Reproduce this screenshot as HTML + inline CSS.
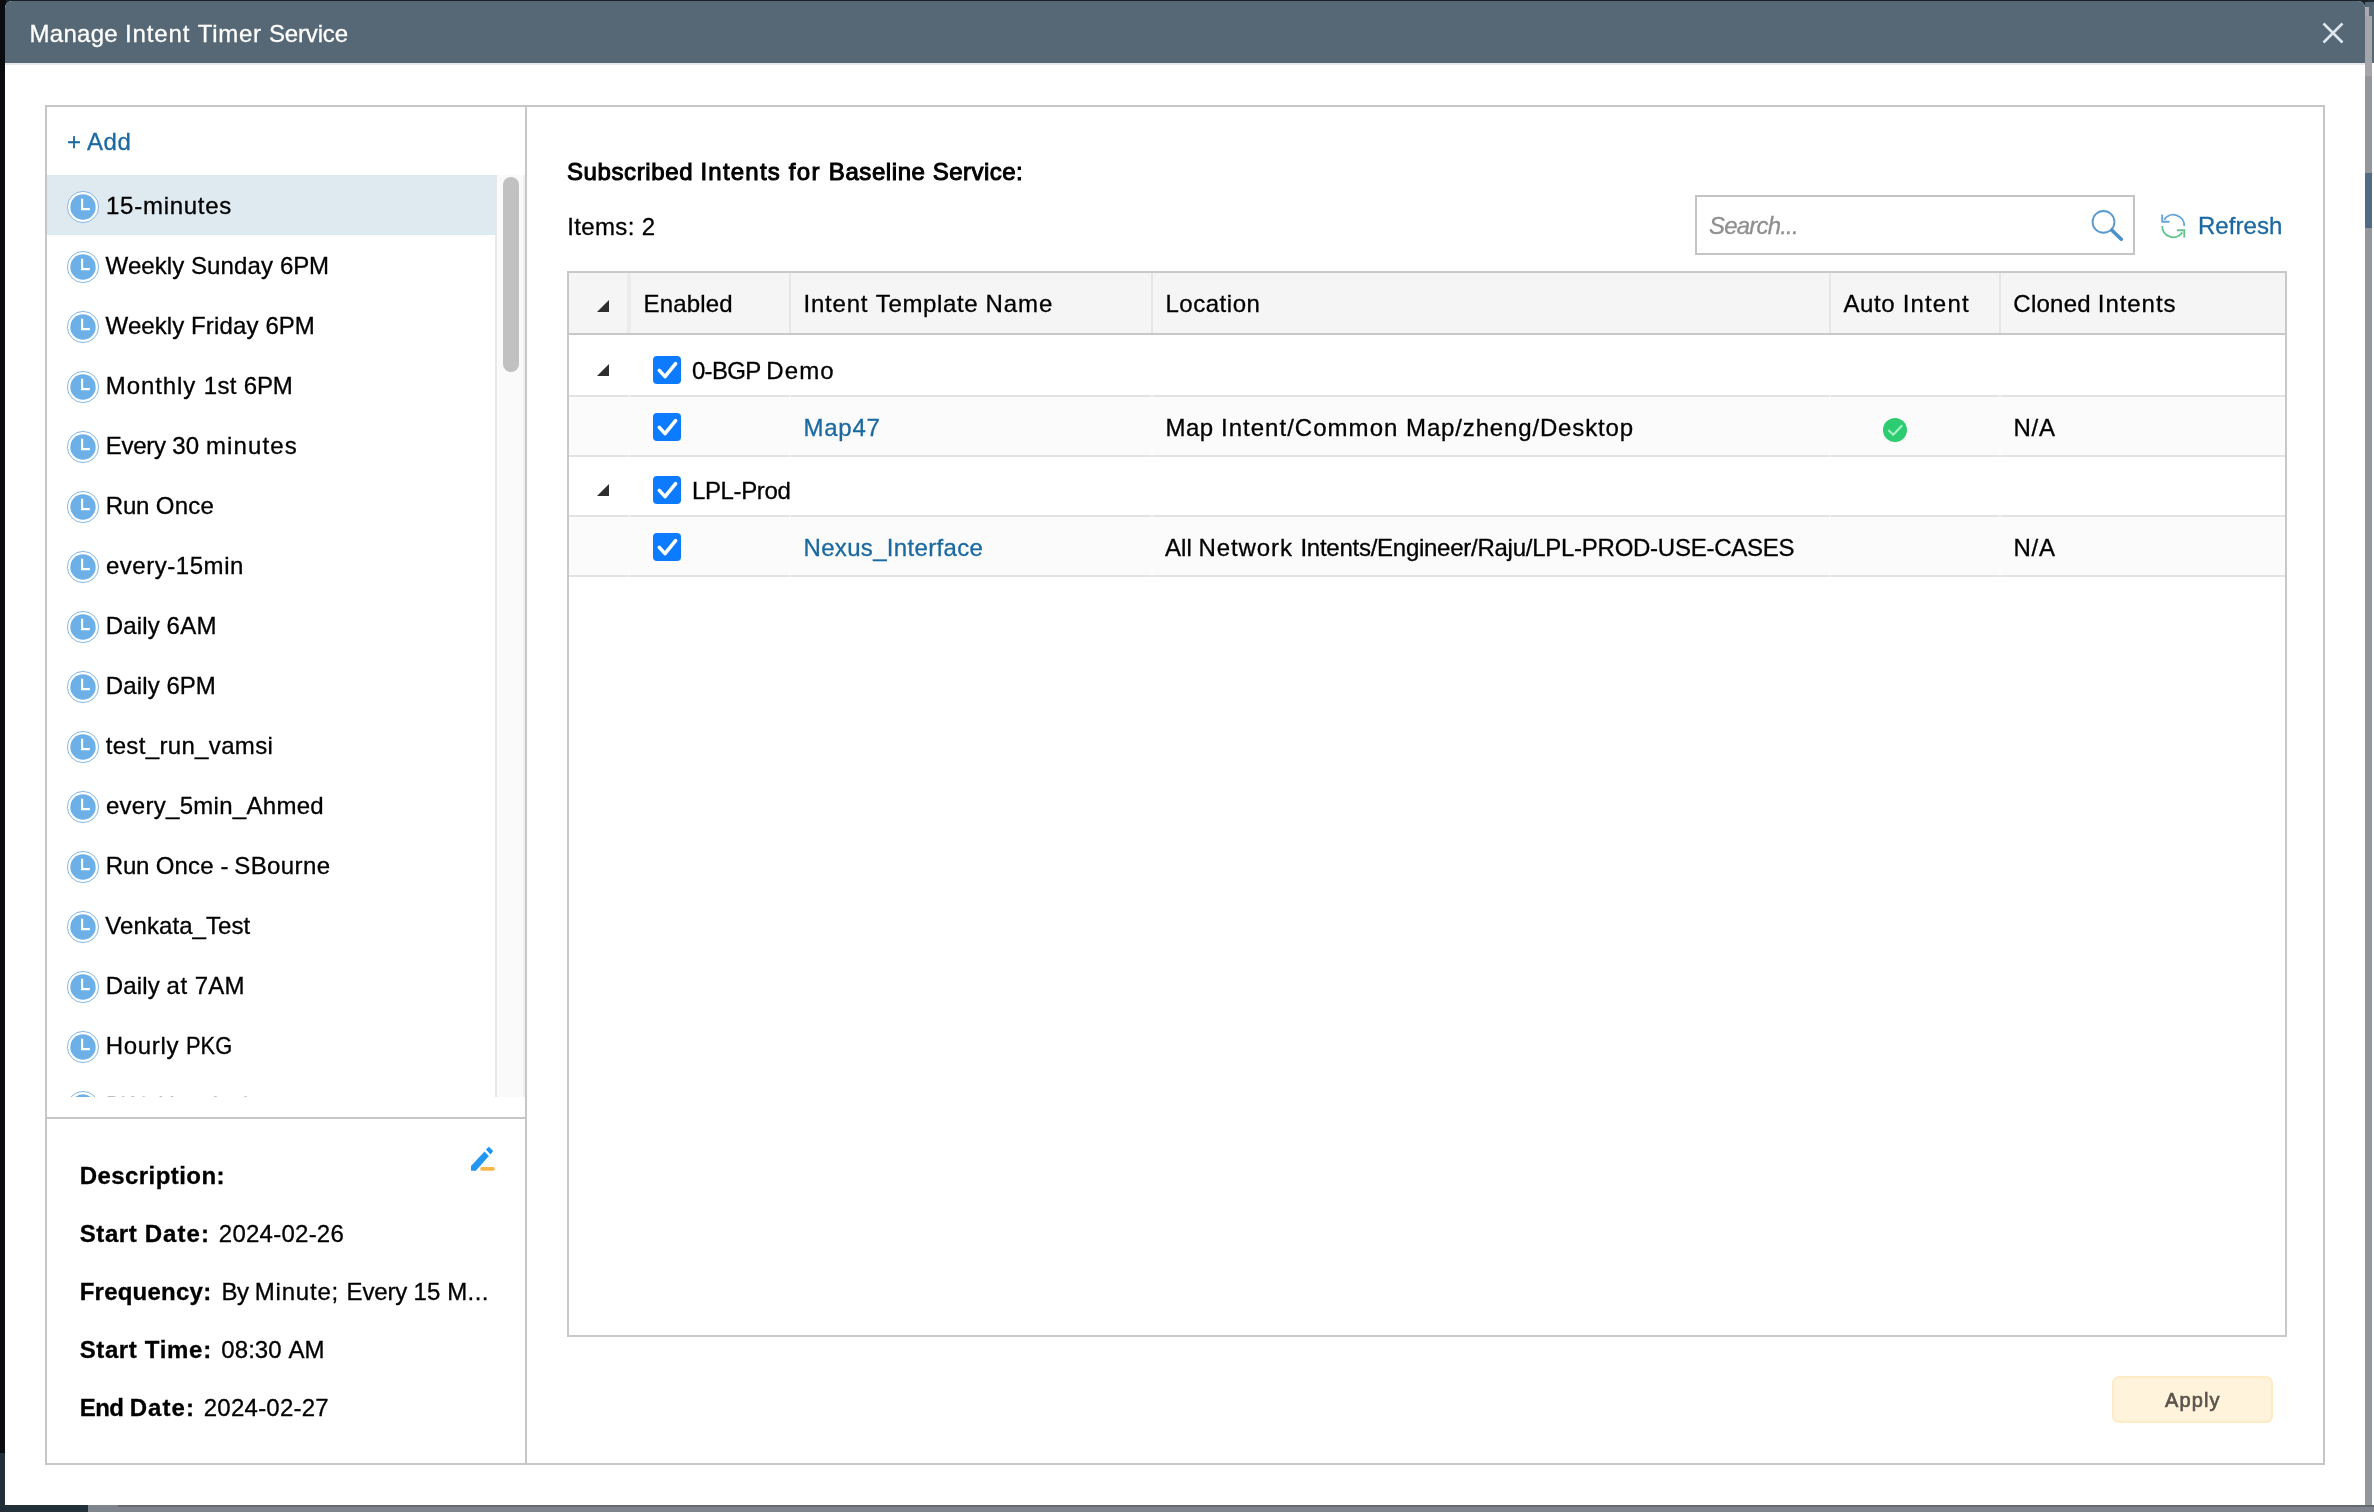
<!DOCTYPE html>
<html lang="en"><head><meta charset="utf-8"><title>Manage Intent Timer Service</title>
<style>
html,body{margin:0;padding:0}
body{width:2374px;height:1512px;position:relative;overflow:hidden;background:#fff;font-family:"Liberation Sans", sans-serif;font-size:24px;line-height:28px;color:#000}
.ab{position:absolute;display:block}
#root{left:0;top:0;width:2374px;height:1512px;overflow:hidden;will-change:transform}
.tx{position:absolute;white-space:nowrap;height:28px;-webkit-text-stroke:0.3px currentColor}
#dlg{left:5px;top:1px;width:2360px;height:1504px;background:#fff;border-radius:7px 7px 0 0;overflow:hidden}
#hdr{left:0;top:0;width:2360px;height:62px;background:#566875}
#hdrline{left:0;top:62px;width:2360px;height:2px;background:#e6eaee}
#panel{left:45px;top:105px;width:2276px;height:1356px;border:2px solid #c6c6c6}
#vdiv{left:525px;top:107px;width:2px;height:1356px;background:#c6c6c6}
#hdiv{left:47px;top:1117px;width:478px;height:2px;background:#c6c6c6}
#list{left:47px;top:175px;width:478px;height:922px;overflow:hidden}
#sel{left:0;top:0;width:448px;height:60px;background:#dfe9f0}
#track{left:448px;top:0;width:30px;height:922px;background:#fafafa;border-left:2px solid #e8e8e8;border-right:2px solid #f0f0f0;box-sizing:border-box}
#thumb{left:456px;top:2px;width:16px;height:195px;border-radius:8px;background:#c1c1c1}
#search{left:1695px;top:195px;width:436px;height:56px;border:2px solid #c4c4c4;background:#fff}
#tbl{left:567px;top:271px;width:1716px;height:1062px;border:2px solid #c8c8c8;background:#fff}
#thead{left:569px;top:273px;width:1716px;height:60px;background:#f5f5f5}
#theadline{left:569px;top:333px;width:1716px;height:2px;background:#c8c8c8}
.cs{position:absolute;top:273px;width:2px;height:60px;background:#e6e6e6}
.rl{position:absolute;left:569px;width:1716px;height:2px;background:#e3e3e3}
.alt{position:absolute;left:569px;width:1716px;height:58px;background:#fbfbfb}
.gap{position:absolute;top:335px;width:2px;height:242px;background:rgba(255,255,255,.35)}
#apply{left:2112px;top:1376px;width:157px;height:43px;border:2px solid #fdebc6;border-radius:7px;background:#fff3db}

</style></head>
<body>
<div id="root" class="ab">
<div class="ab" style="left:0;top:0;width:2374px;height:2px;background:#1d2a34"></div>
<div class="ab" style="left:0;top:0;width:2368px;height:10px;background:#1a222b"></div>
<div class="ab" style="left:0;top:0;width:6px;height:1512px;background:#0b0c10"></div>
<div class="ab" style="left:2364px;top:66px;width:8px;height:1440px;background:#93969a"></div>
<div class="ab" style="left:2364px;top:173px;width:8px;height:55px;background:#526b84"></div>
<div class="ab" style="left:2365px;top:2px;width:9px;height:61px;background:#566875"></div>
<div class="ab" style="left:2365px;top:7px;width:4px;height:60px;background:#a9abae"></div>
<div class="ab" style="left:2365px;top:16px;width:7px;height:60px;background:#a4a6aa"></div>
<div class="ab" style="left:0;top:1453px;width:6px;height:59px;background:#22303a"></div>
<div class="ab" style="left:0;top:1505px;width:2374px;height:7px;background:#80858d"></div>
<div class="ab" style="left:118px;top:1505px;width:2256px;height:2px;background:#656a70"></div>
<div class="ab" style="left:0;top:1505px;width:88px;height:7px;background:#22303a"></div>
<div class="ab" style="left:88px;top:1505px;width:30px;height:7px;background:#7f858c"></div>
<div id="dlg" class="ab"><div id="hdr" class="ab"></div><div id="hdrline" class="ab"></div></div>
<header>
<span class="tx" style="left:29.48px;top:20.00px;color:#fff;"><span style="letter-spacing:0.295px">Manage </span><span style="letter-spacing:0.869px">Intent </span><span style="letter-spacing:0.678px">Timer </span><span style="letter-spacing:-0.148px">Service</span></span>
<svg class="ab" style="left:2321px;top:21px" width="24" height="24" viewBox="0 0 24 24"><path d="M2.5 2.5L21.5 21.5M21.5 2.5L2.5 21.5" stroke="#dfe7ee" stroke-width="2.6" fill="none"/></svg>
</header>
<div id="panel" class="ab"></div><div id="vdiv" class="ab"></div><div id="hdiv" class="ab"></div>
<aside>
<span class="tx" style="left:67.09px;top:128.00px;color:#1a69a0;"><span style="letter-spacing:-0.410px">+ </span><span style="letter-spacing:0.592px">Add</span></span>
<div id="list" class="ab"><div id="sel" class="ab"></div><div id="track" class="ab"></div><div id="thumb" class="ab"></div>
<div class="item"><svg class="ab" style="left:19px;top:15px" width="34" height="34" viewBox="-17 -17 34 34"><circle r="15.6" fill="#fff" stroke="#86b9e6" stroke-width="1"/><circle r="12.7" fill="#6db0e8"/><path d="M-0.9 -8.2V2.1H6.8" fill="none" stroke="#fff" stroke-width="2.1"/></svg><span class="tx" style="left:59.00px;top:17.00px;color:#000;letter-spacing:0.737px;">15-minutes</span></div>
<div class="item"><svg class="ab" style="left:19px;top:75px" width="34" height="34" viewBox="-17 -17 34 34"><circle r="15.6" fill="#fff" stroke="#86b9e6" stroke-width="1"/><circle r="12.7" fill="#6db0e8"/><path d="M-0.9 -8.2V2.1H6.8" fill="none" stroke="#fff" stroke-width="2.1"/></svg><span class="tx" style="left:58.62px;top:77.00px;color:#000;"><span style="letter-spacing:0.062px">Weekly </span><span style="letter-spacing:0.136px">Sunday </span><span style="letter-spacing:-0.117px">6PM</span></span></div>
<div class="item"><svg class="ab" style="left:19px;top:135px" width="34" height="34" viewBox="-17 -17 34 34"><circle r="15.6" fill="#fff" stroke="#86b9e6" stroke-width="1"/><circle r="12.7" fill="#6db0e8"/><path d="M-0.9 -8.2V2.1H6.8" fill="none" stroke="#fff" stroke-width="2.1"/></svg><span class="tx" style="left:58.62px;top:137.00px;color:#000;"><span style="letter-spacing:0.062px">Weekly </span><span style="letter-spacing:0.184px">Friday </span><span style="letter-spacing:-0.117px">6PM</span></span></div>
<div class="item"><svg class="ab" style="left:19px;top:195px" width="34" height="34" viewBox="-17 -17 34 34"><circle r="15.6" fill="#fff" stroke="#86b9e6" stroke-width="1"/><circle r="12.7" fill="#6db0e8"/><path d="M-0.9 -8.2V2.1H6.8" fill="none" stroke="#fff" stroke-width="2.1"/></svg><span class="tx" style="left:58.78px;top:197.00px;color:#000;"><span style="letter-spacing:0.914px">Monthly </span><span style="letter-spacing:0.299px">1st </span><span style="letter-spacing:-0.117px">6PM</span></span></div>
<div class="item"><svg class="ab" style="left:19px;top:255px" width="34" height="34" viewBox="-17 -17 34 34"><circle r="15.6" fill="#fff" stroke="#86b9e6" stroke-width="1"/><circle r="12.7" fill="#6db0e8"/><path d="M-0.9 -8.2V2.1H6.8" fill="none" stroke="#fff" stroke-width="2.1"/></svg><span class="tx" style="left:58.78px;top:257.00px;color:#000;"><span style="letter-spacing:-0.256px">Every </span><span style="letter-spacing:0.105px">30 </span><span style="letter-spacing:1.143px">minutes</span></span></div>
<div class="item"><svg class="ab" style="left:19px;top:315px" width="34" height="34" viewBox="-17 -17 34 34"><circle r="15.6" fill="#fff" stroke="#86b9e6" stroke-width="1"/><circle r="12.7" fill="#6db0e8"/><path d="M-0.9 -8.2V2.1H6.8" fill="none" stroke="#fff" stroke-width="2.1"/></svg><span class="tx" style="left:58.78px;top:317.00px;color:#000;"><span style="letter-spacing:-0.161px">Run </span><span style="letter-spacing:0.223px">Once</span></span></div>
<div class="item"><svg class="ab" style="left:19px;top:375px" width="34" height="34" viewBox="-17 -17 34 34"><circle r="15.6" fill="#fff" stroke="#86b9e6" stroke-width="1"/><circle r="12.7" fill="#6db0e8"/><path d="M-0.9 -8.2V2.1H6.8" fill="none" stroke="#fff" stroke-width="2.1"/></svg><span class="tx" style="left:58.90px;top:377.00px;color:#000;letter-spacing:0.543px;">every-15min</span></div>
<div class="item"><svg class="ab" style="left:19px;top:435px" width="34" height="34" viewBox="-17 -17 34 34"><circle r="15.6" fill="#fff" stroke="#86b9e6" stroke-width="1"/><circle r="12.7" fill="#6db0e8"/><path d="M-0.9 -8.2V2.1H6.8" fill="none" stroke="#fff" stroke-width="2.1"/></svg><span class="tx" style="left:58.78px;top:437.00px;color:#000;"><span style="letter-spacing:0.137px">Daily </span><span style="letter-spacing:0.252px">6AM</span></span></div>
<div class="item"><svg class="ab" style="left:19px;top:495px" width="34" height="34" viewBox="-17 -17 34 34"><circle r="15.6" fill="#fff" stroke="#86b9e6" stroke-width="1"/><circle r="12.7" fill="#6db0e8"/><path d="M-0.9 -8.2V2.1H6.8" fill="none" stroke="#fff" stroke-width="2.1"/></svg><span class="tx" style="left:58.78px;top:497.00px;color:#000;"><span style="letter-spacing:0.137px">Daily </span><span style="letter-spacing:-0.117px">6PM</span></span></div>
<div class="item"><svg class="ab" style="left:19px;top:555px" width="34" height="34" viewBox="-17 -17 34 34"><circle r="15.6" fill="#fff" stroke="#86b9e6" stroke-width="1"/><circle r="12.7" fill="#6db0e8"/><path d="M-0.9 -8.2V2.1H6.8" fill="none" stroke="#fff" stroke-width="2.1"/></svg><span class="tx" style="left:58.66px;top:557.00px;color:#000;letter-spacing:0.343px;">test_run_vamsi</span></div>
<div class="item"><svg class="ab" style="left:19px;top:615px" width="34" height="34" viewBox="-17 -17 34 34"><circle r="15.6" fill="#fff" stroke="#86b9e6" stroke-width="1"/><circle r="12.7" fill="#6db0e8"/><path d="M-0.9 -8.2V2.1H6.8" fill="none" stroke="#fff" stroke-width="2.1"/></svg><span class="tx" style="left:58.90px;top:617.00px;color:#000;letter-spacing:0.292px;">every_5min_Ahmed</span></div>
<div class="item"><svg class="ab" style="left:19px;top:675px" width="34" height="34" viewBox="-17 -17 34 34"><circle r="15.6" fill="#fff" stroke="#86b9e6" stroke-width="1"/><circle r="12.7" fill="#6db0e8"/><path d="M-0.9 -8.2V2.1H6.8" fill="none" stroke="#fff" stroke-width="2.1"/></svg><span class="tx" style="left:58.78px;top:677.00px;color:#000;"><span style="letter-spacing:-0.161px">Run </span><span style="letter-spacing:0.103px">Once </span><span style="letter-spacing:-0.352px">- </span><span style="letter-spacing:0.377px">SBourne</span></span></div>
<div class="item"><svg class="ab" style="left:19px;top:735px" width="34" height="34" viewBox="-17 -17 34 34"><circle r="15.6" fill="#fff" stroke="#86b9e6" stroke-width="1"/><circle r="12.7" fill="#6db0e8"/><path d="M-0.9 -8.2V2.1H6.8" fill="none" stroke="#fff" stroke-width="2.1"/></svg><span class="tx" style="left:58.30px;top:737.00px;color:#000;letter-spacing:0.075px;">Venkata_Test</span></div>
<div class="item"><svg class="ab" style="left:19px;top:795px" width="34" height="34" viewBox="-17 -17 34 34"><circle r="15.6" fill="#fff" stroke="#86b9e6" stroke-width="1"/><circle r="12.7" fill="#6db0e8"/><path d="M-0.9 -8.2V2.1H6.8" fill="none" stroke="#fff" stroke-width="2.1"/></svg><span class="tx" style="left:58.78px;top:797.00px;color:#000;"><span style="letter-spacing:0.137px">Daily </span><span style="letter-spacing:0.457px">at </span><span style="letter-spacing:0.252px">7AM</span></span></div>
<div class="item"><svg class="ab" style="left:19px;top:855px" width="34" height="34" viewBox="-17 -17 34 34"><circle r="15.6" fill="#fff" stroke="#86b9e6" stroke-width="1"/><circle r="12.7" fill="#6db0e8"/><path d="M-0.9 -8.2V2.1H6.8" fill="none" stroke="#fff" stroke-width="2.1"/></svg><span class="tx" style="left:58.78px;top:857.00px;color:#000;"><span style="letter-spacing:0.661px">Hourly </span><span style="display:inline-block;white-space:pre;width:46.17px;transform:scaleX(0.9110);transform-origin:0 50%">PKG</span></span></div>
<div class="item"><svg class="ab" style="left:19px;top:915px" width="34" height="34" viewBox="-17 -17 34 34"><circle r="15.6" fill="#fff" stroke="#86b9e6" stroke-width="1"/><circle r="12.7" fill="#6db0e8"/><path d="M-0.9 -8.2V2.1H6.8" fill="none" stroke="#fff" stroke-width="2.1"/></svg><span class="tx" style="left:58.78px;top:917.00px;color:#000;"><span style="display:inline-block;white-space:pre;width:51.93px;transform:scaleX(0.9054);transform-origin:0 50%">PKG </span><span style="letter-spacing:0.730px">Hourly </span>2</span></div>
</div>
<section id="desc">
<svg class="ab" style="left:468px;top:1144px" width="30" height="30" viewBox="468 1144 30 30"><path d="M471 1166.1L484.5 1151.4L488.9 1156L475.8 1170.7H471Z" fill="#2196f3"/><path d="M485.9 1149.5L488.9 1146.8L493.2 1150.9L490.5 1154.4Z" fill="#2196f3"/><rect x="480.2" y="1167.1" width="14.6" height="3.6" rx="1.8" fill="#f5b64a"/></svg>
<div class="field"><span class="tx" style="left:79.66px;top:1162.00px;color:#000;font-weight:700;letter-spacing:0.436px;">Description:</span></div>
<div class="field"><span class="tx" style="left:79.73px;top:1220.00px;color:#000;font-weight:700;"><span style="letter-spacing:0.602px">Start </span><span style="letter-spacing:1.078px">Date:</span></span><span class="tx" style="left:218.83px;top:1220.00px;color:#000;letter-spacing:0.246px;">2024-02-26</span></div>
<div class="field"><span class="tx" style="left:79.66px;top:1278.00px;color:#000;font-weight:700;letter-spacing:0.236px;">Frequency:</span><span class="tx" style="left:221.40px;top:1278.00px;color:#000;"><span style="letter-spacing:-0.426px">By </span><span style="letter-spacing:0.798px">Minute; </span><span style="letter-spacing:-0.176px">Every </span><span style="letter-spacing:0.105px">15 </span><span style="letter-spacing:0.406px">M...</span></span></div>
<div class="field"><span class="tx" style="left:79.73px;top:1336.00px;color:#000;font-weight:700;"><span style="letter-spacing:0.602px">Start </span><span style="letter-spacing:0.715px">Time:</span></span><span class="tx" style="left:221.34px;top:1336.00px;color:#000;"><span style="letter-spacing:0.057px">08:30 </span><span style="letter-spacing:0.129px">AM</span></span></div>
<div class="field"><span class="tx" style="left:79.66px;top:1394.00px;color:#000;font-weight:700;"><span style="letter-spacing:-0.504px">End </span><span style="letter-spacing:1.078px">Date:</span></span><span class="tx" style="left:203.79px;top:1394.00px;color:#000;letter-spacing:0.241px;">2024-02-27</span></div>
</section>
</aside>
<main>
<span class="tx" style="left:566.92px;top:158.00px;color:#000;-webkit-text-stroke-width:1.0px;"><span style="letter-spacing:0.618px">Subscribed </span><span style="letter-spacing:1.211px">Intents </span><span style="letter-spacing:1.318px">for </span><span style="letter-spacing:0.581px">Baseline </span><span style="letter-spacing:0.447px">Service:</span></span>
<span class="tx" style="left:567.18px;top:213.00px;color:#000;"><span style="letter-spacing:0.362px">Items: </span>2</span>
<div id="search" class="ab"></div>
<span class="tx" style="left:1709.08px;top:212.00px;color:#8f8f8f;font-style:italic;letter-spacing:-0.817px;">Search...</span>
<svg class="ab" style="left:2086px;top:206px" width="42" height="40" viewBox="2086 206 42 40"><circle cx="2103.5" cy="221.9" r="10.9" fill="none" stroke="#5a9bd0" stroke-width="1.9"/><path d="M2111.9 230.2L2121.3 239.3" stroke="#4a90c9" stroke-width="3.6" stroke-linecap="round"/></svg>
<svg class="ab" style="left:2158px;top:211px" width="30" height="30" viewBox="2158 211 30 30" fill="none" stroke-width="1.9"><path d="M2184.3 226A11 11 0 0 0 2164.2 219.6" stroke="#66a5d9"/><path d="M2162.2 214.5V221.8H2169.6" stroke="#66a5d9"/><path d="M2162.2 226A11 11 0 0 0 2182.3 232.4" stroke="#63c391"/><path d="M2184.3 237.5V230.2H2176.9" stroke="#63c391"/></svg>
<span class="tx" style="left:2197.98px;top:212.00px;color:#1a69a0;letter-spacing:0.049px;">Refresh</span>
<div id="tbl" class="ab"></div>
<div class="thead"><div id="thead" class="ab"></div>
<div class="cs" style="left:627px;width:4px;background:#ececec"></div>
<div class="cs" style="left:789px"></div>
<div class="cs" style="left:1151px"></div>
<div class="cs" style="left:1829px"></div>
<div class="cs" style="left:1999px"></div>
<div id="theadline" class="ab"></div>
<svg class="ab" style="left:597px;top:300px" width="12" height="12" viewBox="0 0 12 12"><path d="M0 12H12V0Z" fill="#2e2e2e"/></svg>
<span class="tx" style="left:643.48px;top:290.00px;color:#000;letter-spacing:0.184px;">Enabled</span>
<span class="tx" style="left:803.48px;top:290.00px;color:#000;"><span style="letter-spacing:0.800px">Intent </span><span style="letter-spacing:0.626px">Template </span><span style="letter-spacing:0.977px">Name</span></span>
<span class="tx" style="left:1165.48px;top:290.00px;color:#000;letter-spacing:0.527px;">Location</span>
<span class="tx" style="left:1843.50px;top:290.00px;color:#000;"><span style="letter-spacing:0.616px">Auto </span><span style="letter-spacing:1.186px">Intent</span></span>
<span class="tx" style="left:2013.34px;top:290.00px;color:#000;"><span style="letter-spacing:0.254px">Cloned </span><span style="letter-spacing:0.936px">Intents</span></span>
</div>
<div class="tbody">
<div class="alt" style="top:397px"></div><div class="alt" style="top:517px"></div>
<div class="rl" style="top:395px"></div>
<div class="rl" style="top:455px"></div>
<div class="rl" style="top:515px"></div>
<div class="rl" style="top:575px"></div>
<div class="gap" style="left:628px"></div>
<div class="gap" style="left:789px"></div>
<div class="gap" style="left:1151px"></div>
<div class="gap" style="left:1829px"></div>
<div class="gap" style="left:1999px"></div>
<div class="group"><svg class="ab" style="left:597px;top:364px" width="12" height="12" viewBox="0 0 12 12"><path d="M0 12H12V0Z" fill="#2e2e2e"/></svg><svg class="ab" style="left:653px;top:356px" width="28" height="28" viewBox="0 0 28 28"><rect width="28" height="28" rx="4" fill="#0c7bff"/><path d="M6.3 14.4L12 20.6L22.6 7.6" fill="none" stroke="#fff" stroke-width="3.6" stroke-linecap="round" stroke-linejoin="round"/></svg><span class="tx" style="left:691.95px;top:357.00px;color:#000;"><span style="letter-spacing:-0.664px">0-BGP </span><span style="letter-spacing:1.129px">Demo</span></span></div>
<div class="row"><svg class="ab" style="left:653px;top:413px" width="28" height="28" viewBox="0 0 28 28"><rect width="28" height="28" rx="4" fill="#0c7bff"/><path d="M6.3 14.4L12 20.6L22.6 7.6" fill="none" stroke="#fff" stroke-width="3.6" stroke-linecap="round" stroke-linejoin="round"/></svg><span class="tx" style="left:803.48px;top:414.00px;color:#1a69a0;letter-spacing:0.765px;">Map47</span><span class="tx" style="left:1165.48px;top:414.00px;color:#000;"><span style="letter-spacing:0.530px">Map </span><span style="letter-spacing:1.027px">Intent/Common </span><span style="letter-spacing:0.844px">Map/zheng/Desktop</span></span><svg class="ab" style="left:1881px;top:416px" width="28" height="28" viewBox="1881 416 28 28"><circle cx="1895" cy="429.9" r="12" fill="#2ecc71"/><path d="M1889 430.7L1893.2 434.8L1901.6 425.9" fill="none" stroke="#a5f2c6" stroke-width="2.2" stroke-linecap="round" stroke-linejoin="round"/></svg><span class="tx" style="left:2013.48px;top:414.00px;color:#000;letter-spacing:0.744px;">N/A</span></div>
<div class="group"><svg class="ab" style="left:597px;top:484px" width="12" height="12" viewBox="0 0 12 12"><path d="M0 12H12V0Z" fill="#2e2e2e"/></svg><svg class="ab" style="left:653px;top:476px" width="28" height="28" viewBox="0 0 28 28"><rect width="28" height="28" rx="4" fill="#0c7bff"/><path d="M6.3 14.4L12 20.6L22.6 7.6" fill="none" stroke="#fff" stroke-width="3.6" stroke-linecap="round" stroke-linejoin="round"/></svg><span class="tx" style="left:691.98px;top:477.00px;color:#000;letter-spacing:-0.362px;">LPL-Prod</span></div>
<div class="row"><svg class="ab" style="left:653px;top:533px" width="28" height="28" viewBox="0 0 28 28"><rect width="28" height="28" rx="4" fill="#0c7bff"/><path d="M6.3 14.4L12 20.6L22.6 7.6" fill="none" stroke="#fff" stroke-width="3.6" stroke-linecap="round" stroke-linejoin="round"/></svg><span class="tx" style="left:803.48px;top:534.00px;color:#1a69a0;letter-spacing:0.328px;">Nexus_Interface</span><span class="tx" style="left:1165.00px;top:534.00px;color:#000;"><span style="letter-spacing:0.056px">All </span><span style="letter-spacing:0.892px">Network </span><span style="letter-spacing:-0.260px">Intents/Engineer/Raju/LPL-PROD-USE-CASES</span></span><span class="tx" style="left:2013.48px;top:534.00px;color:#000;letter-spacing:0.744px;">N/A</span></div>
</div>
<div id="apply" class="ab"></div>
<span class="tx" style="left:2165.00px;top:1388.00px;color:#5a534c;font-size:20px;line-height:24px;letter-spacing:1.104px;-webkit-text-stroke-width:0.65px;">Apply</span>
</main>
</div>
</body></html>
